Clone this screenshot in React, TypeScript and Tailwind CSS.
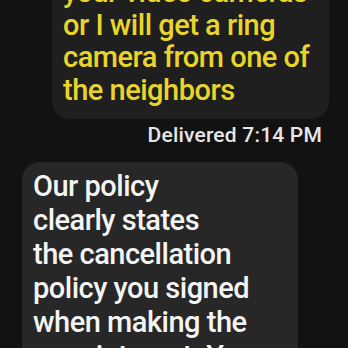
import React from 'react';

const App: React.FC = () => {
  return (
    <div className="w-[348px] h-[348px] overflow-hidden bg-[#121212] font-['Roboto',sans-serif]">
      <div className="flex flex-col">
        {/* incoming (yellow) bubble, top cut off */}
        <div className="ml-[52px] mr-[19px] -mt-[28px] rounded-[18px] bg-[#1f1f1f] pl-[11px] pr-2 pt-1 pb-[13px]">
          <p className="text-[29px] leading-[32.5px] font-medium tracking-[-0.5px] text-[#e9d52a]">
            your video cameras
            <br />
            or I will get a ring
            <br />
            camera from one of
            <br />
            the neighbors
          </p>
        </div>
        <div className="flex justify-end pr-[26px] pt-[3px]">
          <span className="text-[21px] leading-[26px] font-medium tracking-[0.2px] text-[#e6e6e6]">Delivered 7:14 PM</span>
        </div>
        {/* reply bubble */}
        <div className="ml-[22px] w-[276px] mt-[14px] rounded-[18px] bg-[#272727] pl-[11px] pr-2 pt-[7px] pb-4">
          <p className="text-[29px] leading-[34px] font-medium tracking-[-0.5px] text-[#f4f4f4]">
            Our policy
            <br />
            clearly states
            <br />
            the cancellation
            <br />
            policy you signed
            <br />
            when making the
            <br />
            appointment. You
          </p>
        </div>
      </div>
    </div>
  );
};

export default App;
